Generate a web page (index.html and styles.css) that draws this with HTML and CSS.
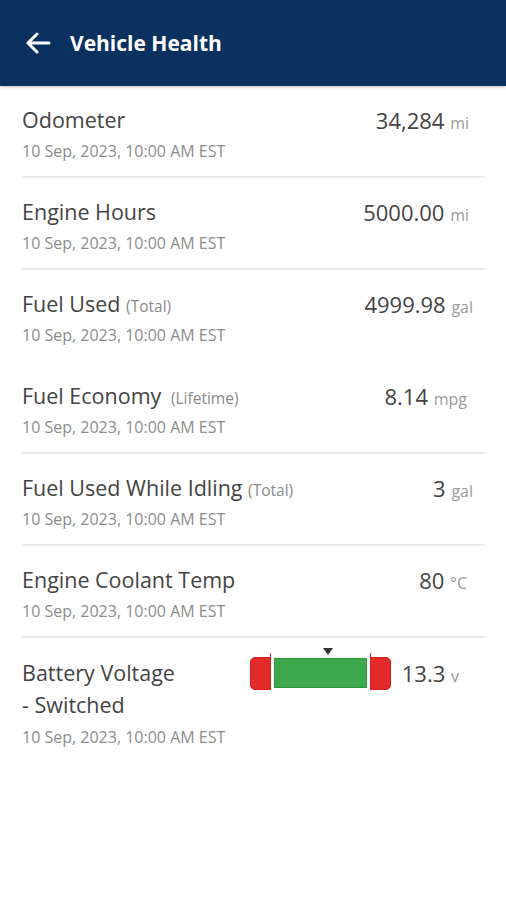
FILE: index.html
```html
<!DOCTYPE html>
<html lang="en">
<head>
  <meta charset="UTF-8">
  <title>Vehicle Health</title>
  <link rel="stylesheet" href="styles.css">
</head>
<body>

  <header class="topo">
    <svg class="voltar" width="26" height="22" viewBox="0 0 26 22">
      <path d="M24 11H3M12 2L3 11l9 9" fill="none" stroke="#fff" stroke-width="3" stroke-linecap="round" stroke-linejoin="round"/>
    </svg>
    <h1>Vehicle Health</h1>
  </header>

  <div class="lista">
    <div class="item">
      <div class="info">
        <div class="nome">Odometer</div>
        <div class="data">10 Sep, 2023, 10:00 AM EST</div>
      </div>
      <div class="valor">34,284 <span class="unid">mi</span></div>
    </div>

    <div class="item">
      <div class="info">
        <div class="nome">Engine Hours</div>
        <div class="data">10 Sep, 2023, 10:00 AM EST</div>
      </div>
      <div class="valor">5000.00 <span class="unid">mi</span></div>
    </div>

    <div class="item sem-linha">
      <div class="info">
        <div class="nome">Fuel Used <span class="obs">(Total)</span></div>
        <div class="data">10 Sep, 2023, 10:00 AM EST</div>
      </div>
      <div class="valor recuo-4">4999.98 <span class="unid">gal</span></div>
    </div>

    <div class="item">
      <div class="info">
        <div class="nome">Fuel Economy <span class="obs largo">(Lifetime)</span></div>
        <div class="data">10 Sep, 2023, 10:00 AM EST</div>
      </div>
      <div class="valor recuo-2">8.14 <span class="unid">mpg</span></div>
    </div>

    <div class="item">
      <div class="info">
        <div class="nome">Fuel Used While Idling <span class="obs">(Total)</span></div>
        <div class="data">10 Sep, 2023, 10:00 AM EST</div>
      </div>
      <div class="valor recuo-4">3 <span class="unid">gal</span></div>
    </div>

    <div class="item">
      <div class="info">
        <div class="nome">Engine Coolant Temp</div>
        <div class="data">10 Sep, 2023, 10:00 AM EST</div>
      </div>
      <div class="valor recuo-2">80 <span class="unid">°C</span></div>
    </div>

    <div class="item sem-linha">
      <div class="info estreito">
        <div class="nome duas">Battery Voltage<br>- Switched</div>
        <div class="data">10 Sep, 2023, 10:00 AM EST</div>
      </div>
      <div class="medidor">
        <div class="barra">
          <span class="seta"></span>
          <div class="faixa vermelha esq"></div>
          <div class="faixa verde"></div>
          <div class="faixa vermelha dir"></div>
        </div>
        <div class="valor">13.3 <span class="unid">v</span></div>
      </div>
    </div>
  </div>

</body>
</html>
```

FILE: styles.css
```css
/* Estilos gerais */
body {
  margin: 0;
  font-family: "Open Sans", Arial, sans-serif;
  background-color: #ffffff;
  color: #444444;
}

.topo {
  height: 86px;
  background-color: #0b3160;
  display: flex;
  align-items: center;
  padding-left: 25px;
  box-shadow: 0 1px 3px rgba(0,0,0,0.25);
}

.voltar {
  margin-right: 19px;
}

.topo h1 {
  margin: 0;
  color: white;
  font-size: 21px;
  font-weight: bold;
}

.lista {
  margin: 0 21px 0 22px;
}

.item {
  display: flex;
  justify-content: space-between;
  padding: 19px 16px 14px 0;
  border-bottom: 2px solid #e8e8e8;
}

.item.sem-linha {
  border-bottom-color: transparent;
}

.nome {
  font-size: 21.5px;
  line-height: 30px;
}

.nome.duas {
  line-height: 32px;
}

.obs {
  font-size: 15.5px;
  line-height: 1;
  color: #8a8a8a;
}

.obs.largo {
  margin-left: 4px;
}

.data {
  margin-top: 5px;
  font-size: 16px;
  line-height: 22px;
  color: #8c8c8c;
}

.valor {
  font-size: 22px;
  line-height: 30px;
  white-space: nowrap;
}

.recuo-4 {
  margin-right: -4px;
}

.recuo-2 {
  margin-right: 2px;
}

.unid {
  font-size: 16px;
  line-height: 1;
  color: #9a9a9a;
}

.estreito {
  width: 210px;
}

.medidor {
  display: flex;
  align-items: center;
  gap: 11px;
  margin-right: 10px;
  height: 34px;
  margin-top: -1px;
}

.barra {
  position: relative;
  display: flex;
  align-items: center;
  gap: 3px;
}

.faixa {
  height: 33px;
  box-sizing: border-box;
}

.vermelha {
  width: 21px;
  background-color: #e52a2a;
  border: 1px solid #cf1f1f;
}

.vermelha.esq {
  border-radius: 5px 0 0 5px;
}

.vermelha.dir {
  border-radius: 0 5px 5px 0;
}

.verde {
  width: 93px;
  height: 30px;
  background-color: #3da94a;
  border: 1px solid #33963f;
}

.seta {
  position: absolute;
  left: 73px;
  top: -9px;
  border-left: 5px solid transparent;
  border-right: 5px solid transparent;
  border-top: 7px solid #333;
}

.vermelha.esq::after,
.vermelha.dir::after {
  content: "";
  position: absolute;
  top: -4px;
  width: 1px;
  height: 8px;
  background-color: #cf1f1f;
}

.vermelha.esq::after {
  left: 20px;
}

.vermelha.dir::after {
  left: 120px;
}
```
